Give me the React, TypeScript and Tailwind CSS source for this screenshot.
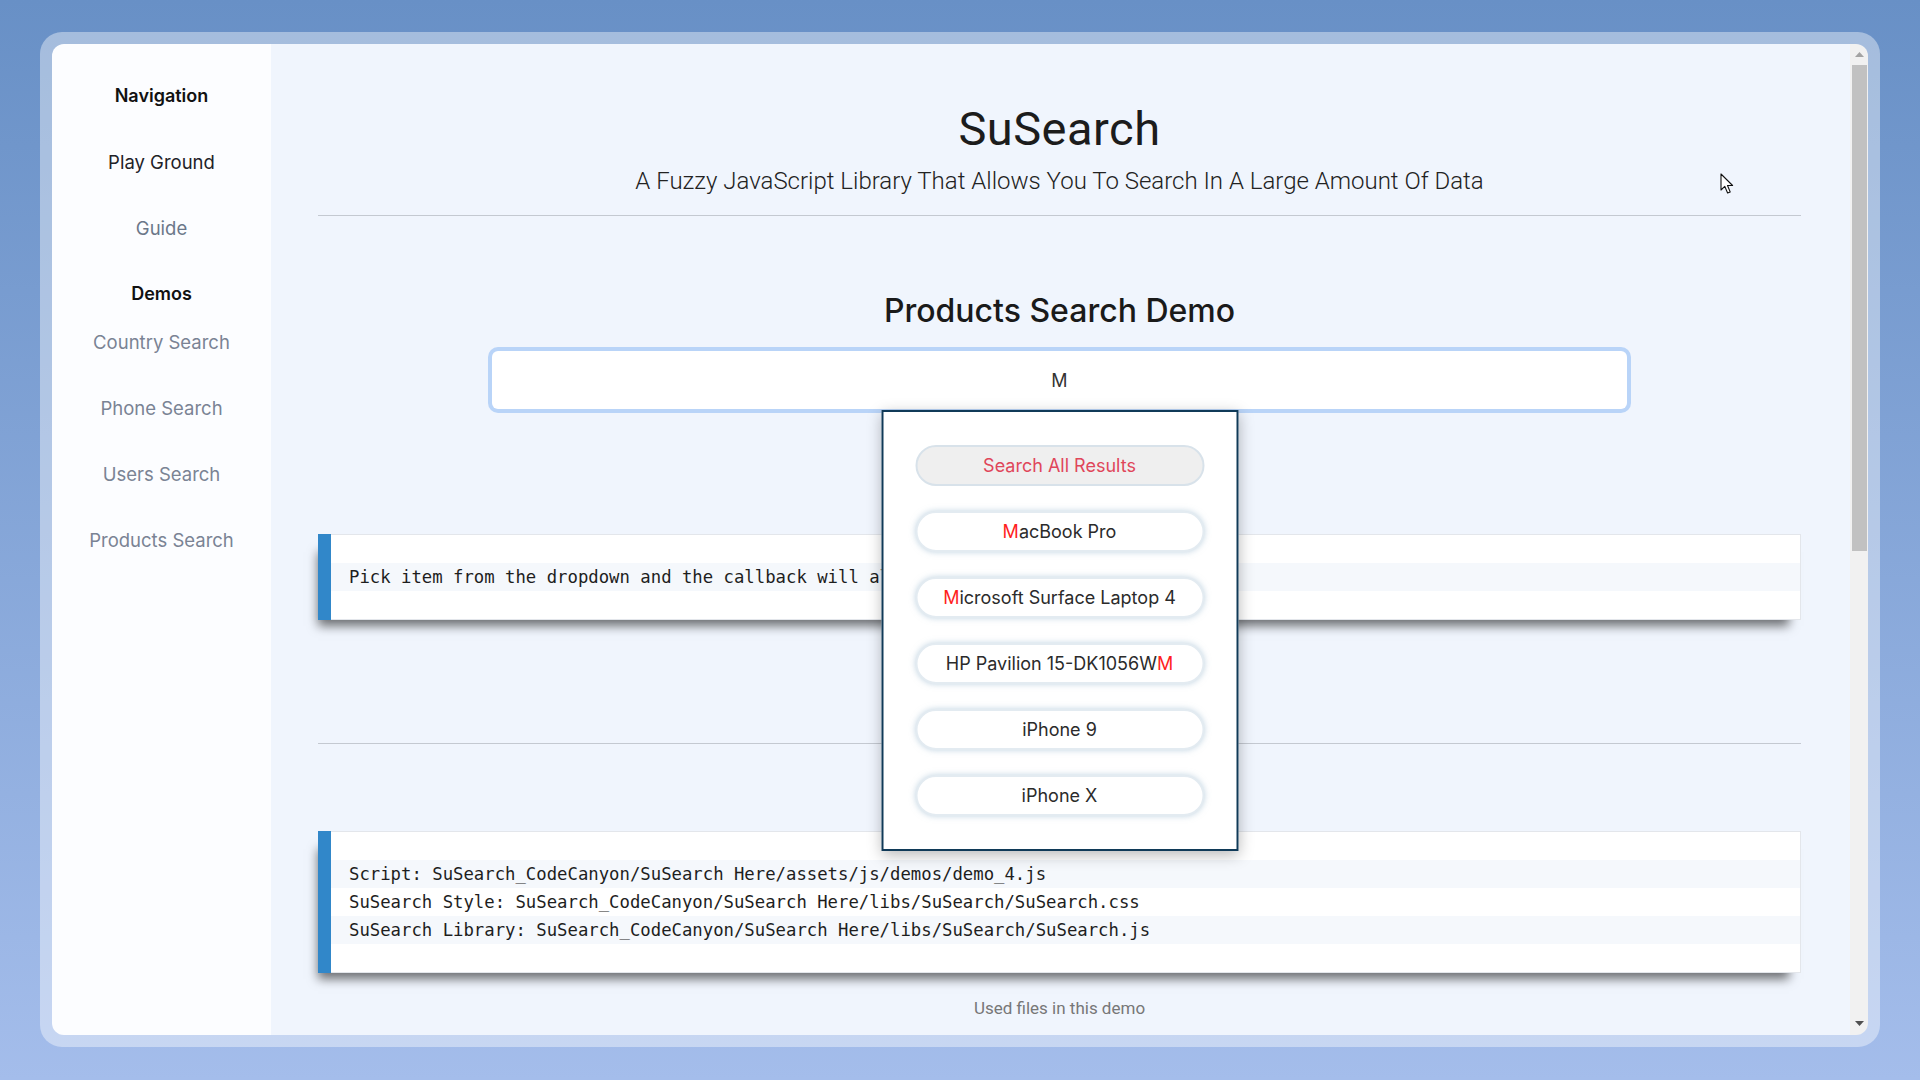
import React from 'react';

const sideFont = { fontFamily: 'Inter, "Noto Sans", sans-serif' };
const roboto = { fontFamily: 'Roboto, "Noto Sans", sans-serif' };
const mono = { fontFamily: '"DejaVu Sans Mono", "Liberation Mono", monospace' };

function Sidebar() {
  const demos = ['Country Search', 'Phone Search', 'Users Search', 'Products Search'];
  return (
    <aside
      className="flex w-[219px] shrink-0 flex-col items-center bg-[#fcfdff] pt-[40px] text-[18.5px] leading-[24px]"
      style={sideFont}
    >
      <div className="text-[18px] font-semibold text-[#111]">Navigation</div>
      <div className="mt-[42px] text-[#1f2228]">Play Ground</div>
      <div className="mt-[42px] text-[#6b7789]">Guide</div>
      <div className="mt-[42px] text-[18px] font-semibold text-[#111]">Demos</div>
      {demos.map((d, i) => (
        <div key={d} className={`${i === 0 ? 'mt-[24px]' : 'mt-[42px]'} text-[#7a8394]`}>
          {d}
        </div>
      ))}
    </aside>
  );
}

function Hl({ text, at }: { text: string; at: number[] }) {
  return (
    <span className="whitespace-pre">
      {text.split('').map((c, i) =>
        at.includes(i) ? (
          <span key={i} className="text-[#ff1e1e]">
            {c}
          </span>
        ) : (
          c
        ),
      )}
    </span>
  );
}

function Dropdown() {
  const items: { text: string; at: number[] }[] = [
    { text: 'MacBook Pro', at: [0] },
    { text: 'Microsoft Surface Laptop 4', at: [0] },
    { text: 'HP Pavilion 15-DK1056WM', at: [22] },
    { text: 'iPhone 9', at: [] },
    { text: 'iPhone X', at: [] },
  ];
  return (
    <div
      className="absolute left-1/2 top-full z-10 mt-[1px] flex w-[357px] -translate-x-1/2 flex-col gap-[25px] border-2 border-[#103a58] bg-white px-[32px] py-[33px] shadow-[0_4px_14px_rgba(0,0,0,0.28)]"
      style={sideFont}
    >
      <div className="flex h-[41px] items-center justify-center rounded-full border-2 border-[#d8e2ea] bg-[#efefef] text-[18px] text-[#e0465a]">
        Search All Results
      </div>
      {items.map((it) => (
        <div
          key={it.text}
          className="flex h-[41px] items-center justify-center rounded-full border-2 border-[#e3ebf1] bg-white text-[18px] text-[#2b2b2b] shadow-[0_0_6px_rgba(140,175,200,0.55)]"
        >
          <Hl text={it.text} at={it.at} />
        </div>
      ))}
    </div>
  );
}

function CodeBox({ lines }: { lines: string[] }) {
  return (
    <div className="flex shadow-[-6px_12px_10px_-6px_rgba(0,0,0,0.55)]">
      <div className="w-[13px] shrink-0 bg-[#3187c9]" />
      <div className="flex-1 border-y border-r border-[#e3e6eb] bg-white py-[28px]">
        {lines.map((l, i) => (
          <div
            key={i}
            className={`${i % 2 === 0 ? 'bg-[#f5f8fc]' : 'bg-white'} whitespace-pre pl-[18px] text-[17.3px] leading-[28px] text-[#1e1e1e]`}
            style={mono}
          >
            {l}
          </div>
        ))}
      </div>
    </div>
  );
}

function Main() {
  return (
    <main className="flex-1 bg-[#f0f5fd] pl-[47px] pr-[49px] pt-[57px]">
      <h1 className="text-center text-[47px] leading-[55px] tracking-[0.5px] text-[#1c1c1c]" style={roboto}>
        SuSearch
      </h1>
      <p className="mt-[11px] text-center text-[24px] font-light leading-[28px] text-[#222]" style={roboto}>
        A Fuzzy JavaScript Library That Allows You To Search In A Large Amount Of Data
      </p>
      <div className="mt-[20px] border-t border-[#c4c9d1]" />

      <h2 className="mt-[77px] text-center text-[32px] font-medium leading-[36px] text-[#1a1a1a]" style={sideFont}>
        Products Search Demo
      </h2>
      <div className="relative mx-auto mt-[22px] w-[1135px]">
        <div
          className="flex h-[58px] items-center justify-center rounded-[6px] bg-white text-[18px] text-[#333] ring-4 ring-[#b9d4f8]"
          style={sideFont}
        >
          M
        </div>
        <Dropdown />
      </div>

      <div className="mt-[125px]">
        <CodeBox lines={['Pick item from the dropdown and the callback will alert the picked item']} />
      </div>
      <div className="mt-[123px] border-t border-[#c4c9d1]" />
      <div className="mt-[87px]">
        <CodeBox
          lines={[
            'Script: SuSearch_CodeCanyon/SuSearch Here/assets/js/demos/demo_4.js',
            'SuSearch Style: SuSearch_CodeCanyon/SuSearch Here/libs/SuSearch/SuSearch.css',
            'SuSearch Library: SuSearch_CodeCanyon/SuSearch Here/libs/SuSearch/SuSearch.js',
          ]}
        />
      </div>
      <p className="mt-[25px] text-center text-[17px] leading-[20px] text-[#777]" style={roboto}>
        Used files in this demo
      </p>
    </main>
  );
}

function Scrollbar() {
  return (
    <div className="flex w-[18px] shrink-0 flex-col bg-[#f1f1f1]">
      <div className="flex h-[21px] items-center justify-center">
        <svg width="9" height="5" viewBox="0 0 9 5">
          <path d="M0 5 L4.5 0 L9 5 Z" fill="#a3a3a3" />
        </svg>
      </div>
      <div className="mx-auto h-[486px] w-[15px] bg-[#c1c1c1]" />
      <div className="flex-1" />
      <div className="flex h-[24px] items-center justify-center">
        <svg width="9" height="5" viewBox="0 0 9 5">
          <path d="M0 0 L9 0 L4.5 5 Z" fill="#505050" />
        </svg>
      </div>
    </div>
  );
}

function Cursor() {
  return (
    <svg className="absolute left-[1720px] top-[173px]" width="15" height="23" viewBox="0 0 15 23">
      <path
        d="M1 1 L1 17 L4.8 13.4 L7.6 20 L10.2 18.9 L7.5 12.5 L12.6 12.5 Z"
        fill="#fff"
        stroke="#111"
        strokeWidth="1.1"
        strokeLinejoin="round"
      />
    </svg>
  );
}

export default function App() {
  return (
    <div className="relative h-screen w-full overflow-hidden bg-linear-to-b from-[#6890c6] to-[#a4bdeb] px-[40px] pb-[33px] pt-[32px]">
      <div className="h-full rounded-[22px] bg-white/40 p-[12px]">
        <div className="flex h-full overflow-hidden rounded-[12px]">
          <Sidebar />
          <Main />
          <Scrollbar />
        </div>
      </div>
      <Cursor />
    </div>
  );
}
